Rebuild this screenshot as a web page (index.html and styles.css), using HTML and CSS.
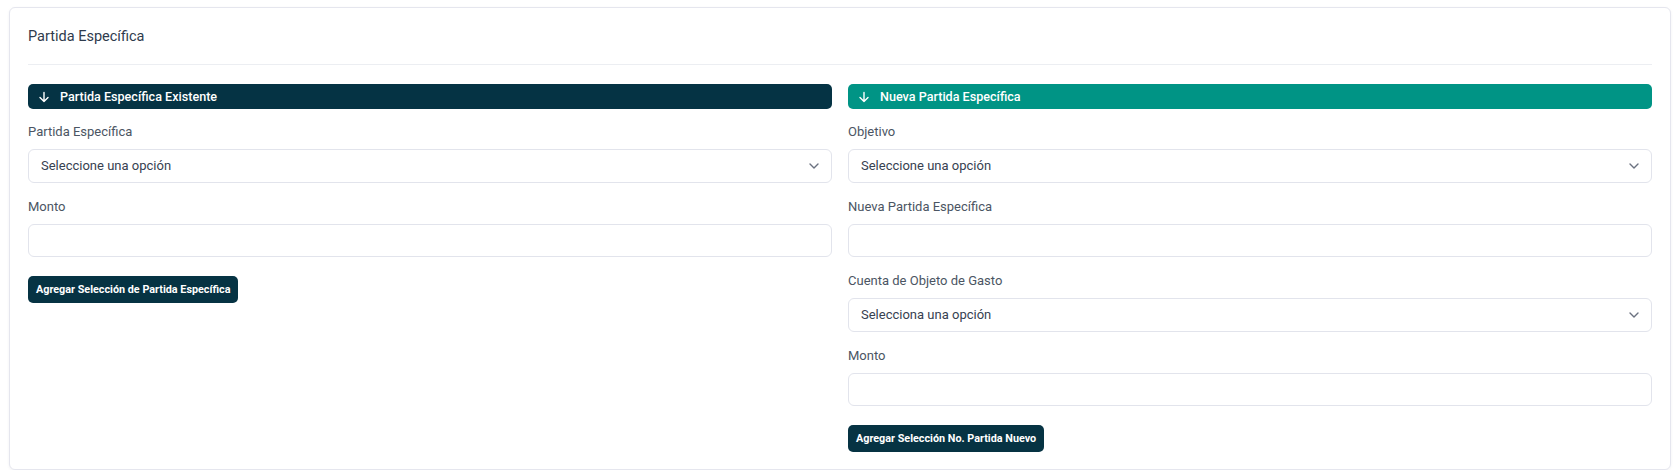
FILE: index.html
```html
<!DOCTYPE html>
<html lang="es">
<head>
    <meta charset="UTF-8">
    <meta name="viewport" content="width=device-width, initial-scale=1.0">
    <title>Partida Específica</title>
    <link rel="stylesheet" href="styles.css">
</head>
<body>
    <div class="card">
        <div class="card-header">
            <h2>Partida Específica</h2>
        </div>

        <div class="columns">
            <div class="column">
                <div class="bar bar-dark">
                    <svg class="bar-icon" viewBox="0 0 12 12" width="12" height="12">
                        <path d="M6 1.5v9M2 6.5l4 4 4-4" fill="none" stroke="#fff" stroke-width="1.4" stroke-linecap="round" stroke-linejoin="round"/>
                    </svg>
                    <span>Partida Específica Existente</span>
                </div>

                <div class="field">
                    <label>Partida Específica</label>
                    <div class="select-wrap">
                        <select class="control">
                            <option>Seleccione una opción</option>
                        </select>
                        <svg class="chevron" viewBox="0 0 10 6" width="10" height="6">
                            <path d="M1 1l4 4 4-4" fill="none" stroke="#6b7280" stroke-width="1.4" stroke-linecap="round" stroke-linejoin="round"/>
                        </svg>
                    </div>
                </div>

                <div class="field">
                    <label>Monto</label>
                    <input type="text" class="control">
                </div>

                <div>
                    <button class="button">Agregar Selección de Partida Específica</button>
                </div>
            </div>

            <div class="column">
                <div class="bar bar-green">
                    <svg class="bar-icon" viewBox="0 0 12 12" width="12" height="12">
                        <path d="M6 1.5v9M2 6.5l4 4 4-4" fill="none" stroke="#fff" stroke-width="1.4" stroke-linecap="round" stroke-linejoin="round"/>
                    </svg>
                    <span>Nueva Partida Específica</span>
                </div>

                <div class="field">
                    <label>Objetivo</label>
                    <div class="select-wrap">
                        <select class="control">
                            <option>Seleccione una opción</option>
                        </select>
                        <svg class="chevron" viewBox="0 0 10 6" width="10" height="6">
                            <path d="M1 1l4 4 4-4" fill="none" stroke="#6b7280" stroke-width="1.4" stroke-linecap="round" stroke-linejoin="round"/>
                        </svg>
                    </div>
                </div>

                <div class="field">
                    <label>Nueva Partida Específica</label>
                    <input type="text" class="control">
                </div>

                <div class="field">
                    <label>Cuenta de Objeto de Gasto</label>
                    <div class="select-wrap">
                        <select class="control">
                            <option>Selecciona una opción</option>
                        </select>
                        <svg class="chevron" viewBox="0 0 10 6" width="10" height="6">
                            <path d="M1 1l4 4 4-4" fill="none" stroke="#6b7280" stroke-width="1.4" stroke-linecap="round" stroke-linejoin="round"/>
                        </svg>
                    </div>
                </div>

                <div class="field">
                    <label>Monto</label>
                    <input type="text" class="control">
                </div>

                <div>
                    <button class="button">Agregar Selección No. Partida Nuevo</button>
                </div>
            </div>
        </div>
    </div>
</body>
</html>
```

FILE: styles.css
```css
body {
    font-family: Roboto, "Liberation Sans", Arial, sans-serif;
    color: #374151;
    margin: 0;
    padding: 7px 5px 0 9px;
    background-color: #fff;
}
.card {
    background-color: #fff;
    border: 1px solid #e5e6ee;
    border-radius: 6px;
    box-shadow: 0 1px 3px rgba(30, 30, 60, 0.06);
    padding: 0 18px 17px;
}
.card-header {
    padding: 19px 0 17px;
    border-bottom: 1px solid #eceef2;
    margin-bottom: 19px;
}
.card-header h2 {
    margin: 0;
    font-size: 14.5px;
    line-height: 20px;
    font-weight: 400;
    color: #2f3b4d;
}
.columns {
    display: grid;
    grid-template-columns: 1fr 1fr;
    gap: 16px;
}
.column {
    display: flex;
    flex-direction: column;
}
.bar {
    display: flex;
    align-items: center;
    height: 25px;
    padding: 0 10px;
    border-radius: 5px;
    color: #fff;
    font-size: 12.6px;
    font-weight: 500;
    margin-bottom: 13px;
}
.bar-dark {
    background-color: #053344;
}
.bar-green {
    background-color: #009485;
}
.bar-icon {
    margin-right: 10px;
}
.field {
    margin-bottom: 14px;
}
.field label {
    display: block;
    font-size: 13px;
    line-height: 20px;
    color: #4b5563;
    margin-bottom: 7px;
}
.control {
    display: block;
    box-sizing: border-box;
    width: 100%;
    height: 33.5px;
    padding: 0 12px;
    border: 1px solid #e2e4ec;
    border-radius: 6px;
    background-color: #fff;
    font-family: inherit;
    font-size: 13px;
    color: #374151;
    outline: none;
}
select.control {
    appearance: none;
    -webkit-appearance: none;
}
.select-wrap {
    position: relative;
}
.chevron {
    position: absolute;
    right: 13px;
    top: 14px;
}
.button {
    margin-top: 5px;
    height: 27px;
    padding: 0 8px;
    border: none;
    border-radius: 5px;
    background-color: #063343;
    color: #fff;
    font-family: inherit;
    font-size: 10.8px;
    font-weight: 700;
    cursor: pointer;
}
```
